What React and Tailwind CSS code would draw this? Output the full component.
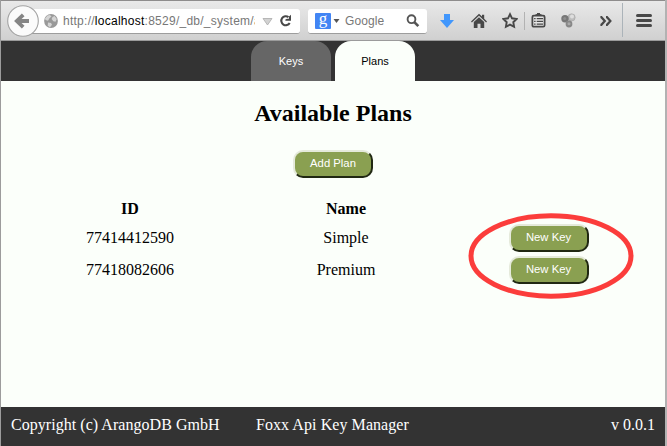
import React from "react";

const sans = "font-['Liberation_Sans',Arial,sans-serif]";

function Toolbar() {
  return (
    <header className={`flex h-[41px] shrink-0 items-start border-t border-b border-t-[#8e8c8c] border-b-[#9b9b9b] bg-linear-to-b from-[#e9e9e9] to-[#d0d0d0] ${sans}`}>
      <svg className="relative z-10 mt-[3px] ml-[5px] h-[34px] w-[34px] shrink-0" viewBox="0 0 34 34">
        <circle cx="17" cy="17" r="15.3" fill="#fbfbfb" stroke="#a3a3a3" strokeWidth="1.1" />
        <path d="M17.2 10.8 10.8 17l6.4 6.2M11.5 17H23" fill="none" stroke="#858585" strokeWidth="3.8" />
      </svg>
      <div className="mt-2 -ml-[9px] flex h-[25px] w-[269px] shrink-0 items-center rounded-r-[3px] border-b border-[#9d9d9d] bg-white pl-[13px]">
        <svg className="h-[14px] w-[14px] shrink-0" viewBox="0 0 14 14">
          <circle cx="7" cy="7" r="6.9" fill="#999" />
          <path d="M1 4.5 3.5 1.6 6 1l1.5 1.4-2 1.8L4 6.7 1.5 6zM8.5 3l2-1 2.3 3-1.3 2.7-2.2-.4L7.6 5zM4 8.5l3 .6 1 1.7-2 2.5-2.3-1.5z" fill="#d4d4d4" />
        </svg>
        <div className="ml-[5px] w-[192px] shrink-0 overflow-hidden text-[12px] leading-4 tracking-[0.26px] whitespace-nowrap text-[#777]">
          http://<span className="text-black">localhost</span>:8529/_db/_system/a
        </div>
        <svg className="ml-[7px] h-[9px] w-[11px] shrink-0" viewBox="0 0 11 9">
          <path d="M1 1.5h9L5.5 8z" fill="#d2d2d2" stroke="#aaa" strokeWidth=".8" />
        </svg>
        <svg className="ml-[6px] h-[14px] w-[14px] shrink-0" viewBox="0 0 14 14">
          <path d="M9.5 3.1A4.5 4.5 0 1 0 10.7 9" fill="none" stroke="#484848" strokeWidth="2.1" />
          <path d="M12 .8v6H6.4V5.6l1.6-.8h2V2.5z" fill="#484848" />
        </svg>
      </div>
      <div className="mt-2 ml-2 flex h-[25px] w-[119px] shrink-0 items-center rounded-[3px] border-b border-[#9d9d9d] bg-white pl-[7px]">
        <div className="flex h-4 w-4 items-center justify-center rounded-[1px] bg-[#4285f4] font-['Liberation_Serif',serif] text-[17px] leading-none text-white">
          <span className="-mt-[5px]">g</span>
        </div>
        <svg className="ml-[2px] h-1 w-[7px]" viewBox="0 0 6 4"><path d="M0 0h6L3 4z" fill="#555" /></svg>
        <span className="ml-[5px] w-[61px] text-[12px] tracking-[0.1px] text-[#777]">Google</span>
        <svg className="h-[14px] w-[14px]" viewBox="0 0 14 14">
          <circle cx="5.5" cy="5.2" r="3.9" fill="none" stroke="#555" strokeWidth="1.9" />
          <path d="m8.3 8.2 4 4" stroke="#555" strokeWidth="2.6" />
        </svg>
      </div>
      <svg className="mt-3 ml-[13px] h-4 w-[14px] shrink-0" viewBox="0 0 14 16">
        <path d="M4 1h6v6h4l-7 8-7-8h4z" fill="#4297fc" />
      </svg>
      <svg className="mt-3 ml-[17px] h-4 w-4 shrink-0" viewBox="0 0 16 16" fill="#484848">
        <path d="M8 .8 11 3.6V1.7h2.2v4L16 8.4l-.9 1L8 2.8 .9 9.4l-.9-1z" />
        <path d="m8 4.2 5.2 4.8v6H9.5v-4.3h-3V15H2.8V9z" />
      </svg>
      <svg className="mt-[11px] ml-[15px] h-[17px] w-4 shrink-0" viewBox="0 0 16 17">
        <path d="m8 2.2 2 4.1 4.6.7-3.3 3.2.8 4.6L8 12.6l-4.1 2.2.8-4.6L1.4 7 6 6.3z" fill="none" stroke="#484848" strokeWidth="1.9" />
      </svg>
      <div className="mt-[11px] ml-[6px] h-[18px] w-px shrink-0 bg-[#b2b2b2]" />
      <svg className="mt-3 ml-[6px] h-[15px] w-[15px] shrink-0" viewBox="0 0 15 15">
        <path d="M4.3 2.2V1.4L6 .9V0h3v.9l1.7.5v.8z" fill="#484848" />
        <rect x="1.4" y="2.7" width="12.2" height="11" rx="1.4" fill="#e6e6e6" stroke="#484848" strokeWidth="1.8" />
        <path d="M3.1 5.7h1.5M5.7 5.7h6.3M3.1 8.4h1.5M5.7 8.4h6.3M3.1 11.1h1.5M5.7 11.1h6.3" stroke="#484848" strokeWidth="1.2" />
      </svg>
      <svg className="mt-3 ml-[15px] h-[15px] w-[15px] shrink-0" viewBox="0 0 15 15">
        <circle cx="10.6" cy="4.4" r="3.6" fill="#bdbdbd" stroke="#a6a6a6" strokeWidth=".6" />
        <circle cx="11" cy="3.6" r="2" fill="#dedede" />
        <circle cx="4" cy="5.7" r="3.7" fill="#777" />
        <circle cx="3.7" cy="5.4" r="1.5" fill="#8e8e8e" />
        <circle cx="8" cy="11" r="3.4" fill="#888" />
        <circle cx="8" cy="10.8" r="1.5" fill="#aaa" />
      </svg>
      <svg className="mt-[15px] ml-6 h-[10px] w-3 shrink-0" viewBox="0 0 12 10">
        <path d="M.4 1.2h1L4.8 5 1.4 8.8h-1M6 1.2h1L10.4 5 7 8.8h-1" fill="none" stroke="#484848" strokeWidth="2.2" />
      </svg>
      <div className="mt-[2px] ml-[10px] h-[34px] w-px shrink-0 bg-[#abb3b9]" />
      <div className="mt-[13px] ml-[13px] flex w-4 shrink-0 flex-col gap-[2px]">
        <div className="h-[3px] rounded-full bg-[#484848]" />
        <div className="h-[3px] rounded-full bg-[#484848]" />
        <div className="h-[3px] rounded-full bg-[#484848]" />
      </div>
    </header>
  );
}

function PlanButton({ children }) {
  return (
    <button className={`flex h-7 w-20 items-center justify-center rounded-[10px] border-2 border-t-[#e5eadb] border-r-[#202812] border-b-[#202812] border-l-[#e5eadb] bg-[#8aa051] text-[11.3px] leading-none text-white ${sans}`}>
      {children}
    </button>
  );
}

const plans = [
  { id: "77414412590", name: "Simple" },
  { id: "77418082606", name: "Premium" },
];

export default function App() {
  return (
    <div className="relative flex h-[446px] w-[667px] flex-col overflow-hidden border-r-2 border-l border-r-[#b2b2b2] border-l-[#9c9c9c] bg-[#fbfffa] font-['Liberation_Serif','Times_New_Roman',serif] text-base text-black">
      <Toolbar />
      <nav className={`flex h-10 shrink-0 justify-center gap-1 bg-[#333] text-[11px] ${sans}`}>
        <div className="flex w-20 items-center justify-center rounded-t-[16px] bg-[#666] text-white">Keys</div>
        <div className="flex w-20 items-center justify-center rounded-t-[16px] bg-[#fbfffa] text-black">Plans</div>
      </nav>
      <main className="flex flex-1 flex-col items-center">
        <h1 className="mt-[18px] text-2xl leading-7 font-bold">Available Plans</h1>
        <div className="mt-[23px]"><PlanButton>Add Plan</PlanButton></div>
        <div className="mt-[17px] grid w-[648px] grid-cols-[242px_190px_215px] text-center">
          <div className="h-[27px] pt-[2px] leading-6 font-bold">ID</div>
          <div className="pt-[2px] leading-6 font-bold">Name</div>
          <div />
          {plans.map((plan) => (
            <React.Fragment key={plan.id}>
              <div className="flex h-8 items-center justify-center pb-px">{plan.id}</div>
              <div className="flex h-8 items-center justify-center pb-px">{plan.name}</div>
              <div className="flex h-8 items-center justify-center"><PlanButton>New Key</PlanButton></div>
            </React.Fragment>
          ))}
        </div>
      </main>
      <footer className="flex h-[39px] shrink-0 bg-[#333] px-[10px] pt-[6px] text-white">
        <span className="w-[245px] tracking-[0.04px]">Copyright (c) ArangoDB GmbH</span>
        <span className="tracking-[0.07px]">Foxx Api Key Manager</span>
        <span className="ml-auto">v 0.0.1</span>
      </footer>
      <svg className="pointer-events-none absolute top-[212px] left-[467px] h-[88px] w-[168px]" viewBox="0 0 168 88">
        <ellipse cx="83" cy="44" rx="80" ry="40.2" fill="none" stroke="#fb3d3b" strokeWidth="5" />
      </svg>
    </div>
  );
}
